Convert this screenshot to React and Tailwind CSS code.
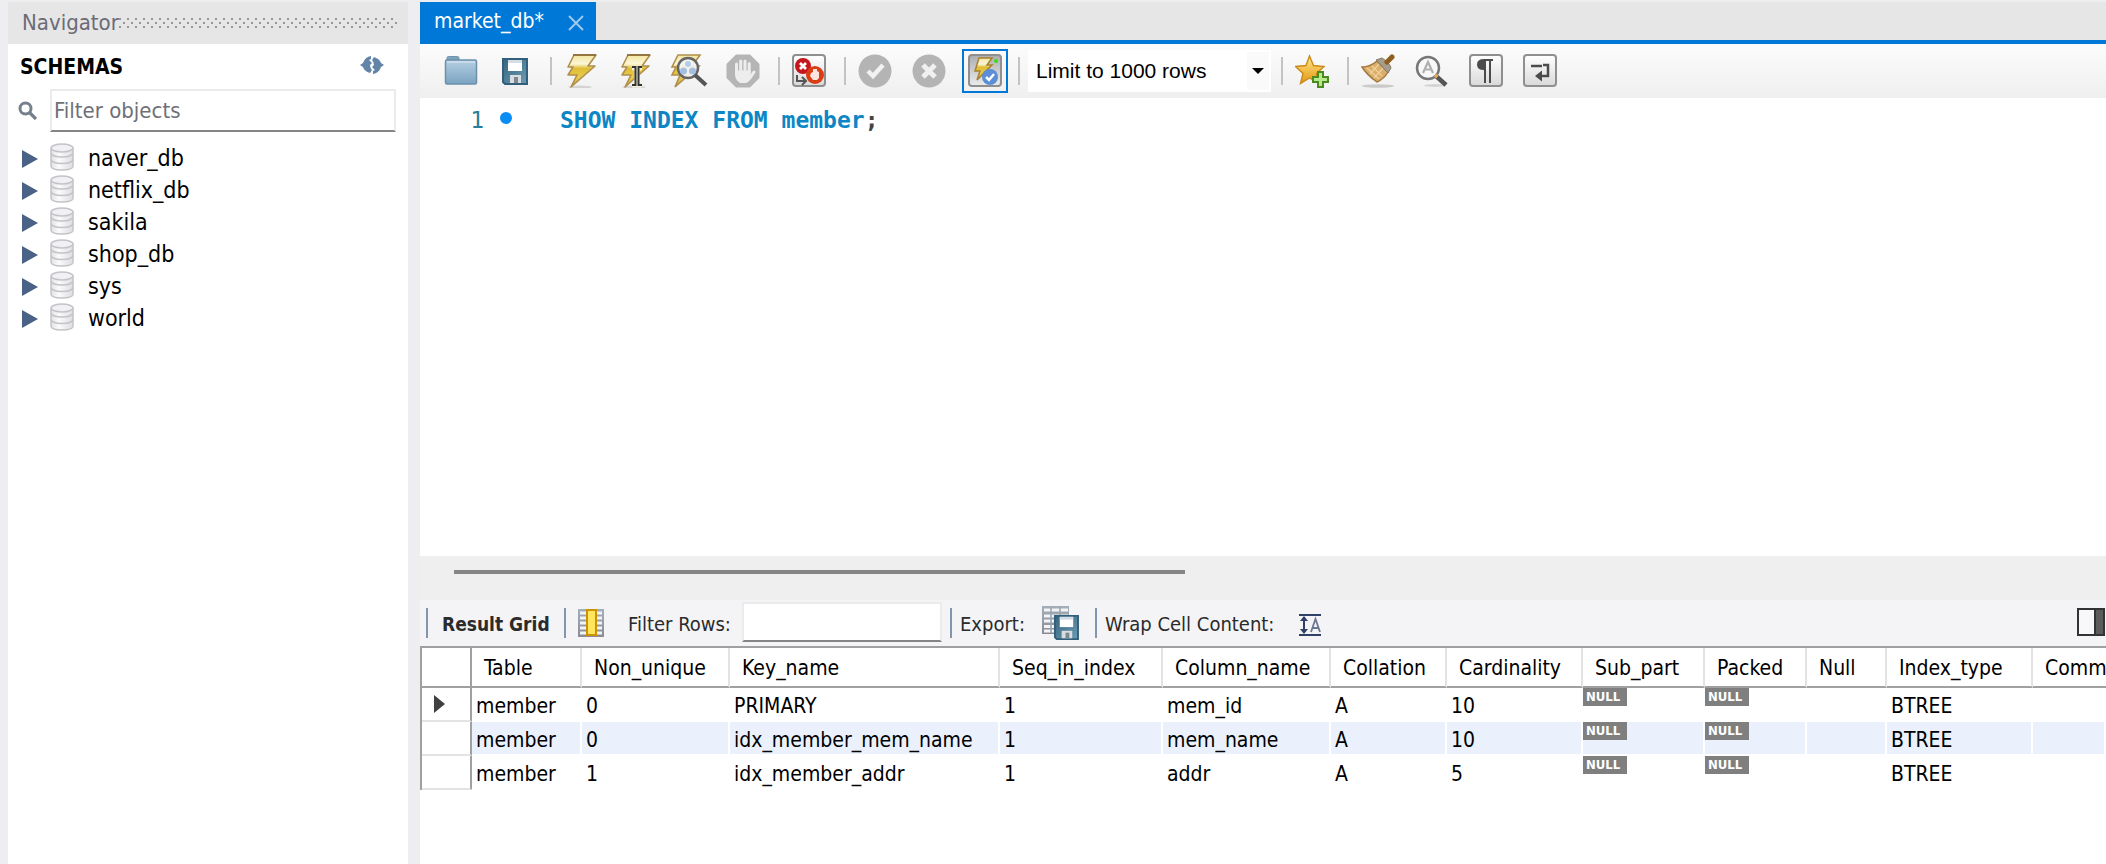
import React, { useState } from 'react';
import clsx from 'clsx';

const SCHEMAS = ['naver_db', 'netflix_db', 'sakila', 'shop_db', 'sys', 'world'];

const COLUMNS = [
  { name: 'Table', width: 'w-[110px]' },
  { name: 'Non_unique', width: 'w-[148px]' },
  { name: 'Key_name', width: 'w-[270px]' },
  { name: 'Seq_in_index', width: 'w-[163px]' },
  { name: 'Column_name', width: 'w-[168px]' },
  { name: 'Collation', width: 'w-[116px]' },
  { name: 'Cardinality', width: 'w-[136px]' },
  { name: 'Sub_part', width: 'w-[122px]' },
  { name: 'Packed', width: 'w-[102px]' },
  { name: 'Null', width: 'w-[80px]' },
  { name: 'Index_type', width: 'w-[146px]' },
  { name: 'Comment', width: 'w-auto' },
];

const ROWS = [
  ['member', '0', 'PRIMARY', '1', 'mem_id', 'A', '10', null, null, '', 'BTREE', ''],
  ['member', '0', 'idx_member_mem_name', '1', 'mem_name', 'A', '10', null, null, '', 'BTREE', ''],
  ['member', '1', 'idx_member_addr', '1', 'addr', 'A', '5', null, null, '', 'BTREE', ''],
];

const Icon = ({ size = 34, children }) => (
  <svg width={size} height={size} viewBox={`0 0 ${size} ${size}`} className="block shrink-0" aria-hidden="true">
    {children}
  </svg>
);

// gradients shared by all the toolbar icons
const IconDefs = () => (
  <svg className="absolute h-0 w-0" aria-hidden="true">
    <defs>
      <linearGradient id="gFolder" x1="0" y1="0" x2="0" y2="1">
        <stop offset="0" stopColor="#b5cfe2" />
        <stop offset="1" stopColor="#7ba3c1" />
      </linearGradient>
      <linearGradient id="gBolt" x1="0" y1="0" x2="0" y2="1">
        <stop offset="0" stopColor="#f3e6a0" />
        <stop offset="0.28" stopColor="#fbf6d8" />
        <stop offset="0.42" stopColor="#dfbd35" />
        <stop offset="0.7" stopColor="#e8cc4e" />
        <stop offset="1" stopColor="#c9a12e" />
      </linearGradient>
      <linearGradient id="gButton" x1="0" y1="0" x2="0" y2="1">
        <stop offset="0" stopColor="#ffffff" />
        <stop offset="1" stopColor="#d9d9d9" />
      </linearGradient>
      <linearGradient id="gPressed" x1="0" y1="0" x2="0" y2="1">
        <stop offset="0" stopColor="#adadad" />
        <stop offset="1" stopColor="#ececec" />
      </linearGradient>
      <linearGradient id="gStar" x1="0" y1="0" x2="0" y2="1">
        <stop offset="0" stopColor="#ffe98a" />
        <stop offset="1" stopColor="#e2960f" />
      </linearGradient>
      <linearGradient id="gGrid" x1="0" y1="0" x2="0" y2="1">
        <stop offset="0" stopColor="#a3b0bb" />
        <stop offset="1" stopColor="#8b8b93" />
      </linearGradient>
      <linearGradient id="gDisk" x1="0" y1="0" x2="1" y2="1">
        <stop offset="0" stopColor="#34647f" />
        <stop offset="1" stopColor="#6d9bb3" />
      </linearGradient>
      <linearGradient id="gDb" x1="0" y1="0" x2="1" y2="0">
        <stop offset="0" stopColor="#e2e2e5" />
        <stop offset="0.35" stopColor="#fafafb" />
        <stop offset="1" stopColor="#dddee2" />
      </linearGradient>
    </defs>
  </svg>
);

const Bolt = () => (
  <>
    <ellipse cx="16" cy="33" rx="12" ry="1.5" fill="#000" opacity="0.12" />
    <path d="M10 1H32L24 12H31L7 33L13 21H4L9 13H4Z" fill="url(#gBolt)" stroke="#b08f4e" strokeWidth="1.6" strokeLinejoin="round" />
    <path d="M9 1H32" stroke="#8a6a35" strokeWidth="1.6" />
  </>
);

const FolderIcon = () => (
  <Icon>
    <path d="M3 7V4q0-1.500 1.500-1.500h9q1.500 0 1.500 1.500v3z" fill="#7fa3bd" stroke="#6f93ad" />
    <rect x="1.500" y="6" width="31" height="24" rx="1.500" fill="url(#gFolder)" stroke="#6b90ab" strokeWidth="1.500" />
    <path d="M3 8H31" stroke="#cfe1ee" strokeWidth="1.500" />
  </Icon>
);

const Disk = () => (
  <>
    <path d="M1 1H25V26H3L1 24Z" fill="url(#gDisk)" stroke="#32607c" strokeWidth="2" />
    <rect x="6" y="2" width="14" height="11" fill="#fff" />
    <rect x="6" y="2" width="14" height="3" fill="#d5dde4" />
    <rect x="8" y="17" width="11" height="8" fill="#d9dde0" />
    <rect x="12" y="19" width="4" height="6" fill="#7c878f" />
  </>
);

const SaveIcon = () => (
  <Icon>
    <g transform="translate(4 4)">
      <Disk />
    </g>
  </Icon>
);

const BoltIcon = () => (
  <Icon>
    <Bolt />
  </Icon>
);

const BoltCursorIcon = () => (
  <Icon>
    <Bolt />
    <path d="M14 14H24M14 31H24M19 14V31" stroke="#f6f1dc" strokeWidth="5" />
    <path d="M14 13H17.500V31H14M24 13H20.500V31H24" fill="none" stroke="#333" strokeWidth="2" />
  </Icon>
);

const BoltSearchIcon = () => (
  <svg width="38" height="34" viewBox="0 0 38 34" className="block shrink-0" aria-hidden="true">
    <path d="M8 1H30L22 12H29L5 33L10 21H2L6 13H2Z" fill="url(#gBolt)" stroke="#b08f4e" strokeWidth="1.600" />
    <circle cx="18" cy="14" r="10" fill="#f3f5f2" fillOpacity="0.92" stroke="#666" strokeWidth="2.500" />
    <circle cx="18" cy="10" r="3" fill="#b5cdeb" />
    <circle cx="13.500" cy="17" r="3.500" fill="#a3c0e4" />
    <circle cx="22.500" cy="17" r="3.500" fill="#a3c0e4" />
    <path d="M25 21L36 31" stroke="#555" strokeWidth="4" />
  </svg>
);

const HandIcon = () => (
  <Icon>
    <path d="M10 0.500H24L33.500 10V24L24 33.500H10L0.500 24V10Z" fill="#b5b5b5" />
    <g fill="none" stroke="#ededed" strokeWidth="3" strokeLinecap="round">
      <path d="M10.500 18V10M14.700 17V7M19 17V7M23.200 18V9.500M24 24L28 18" />
    </g>
    <path d="M9 16.500H24.700V21L27 20Q25 27 20 29H14Q9 26 9 20Z" fill="#ededed" />
  </Icon>
);

const ButtonFrame = ({ fill = 'url(#gButton)' }) => (
  <rect x="1" y="1" width="32" height="31" rx="3" fill={fill} stroke="#8f8f8f" strokeWidth="2" />
);

const StopOnErrorIcon = () => (
  <Icon>
    <ButtonFrame />
    <path d="M5 21V27H13M10 23L14 27L10 31" fill="none" stroke="#555" strokeWidth="2" />
    <circle cx="11" cy="12" r="8" fill="#c4161c" />
    <path d="M8 9L14 15M14 9L8 15" stroke="#fff" strokeWidth="2.800" />
    <circle cx="23" cy="21" r="9" fill="#dc3c14" />
    <path d="M19 19L21 18V15H25V17L27 18V24L25 26H21L18 22Z" fill="#fbe5df" />
  </Icon>
);

const CommitIcon = () => (
  <Icon>
    <circle cx="17" cy="17" r="16.500" fill="#b4b4b4" />
    <path d="M10 17L15 22L25 11" fill="none" stroke="#f2f2f2" strokeWidth="4.500" />
  </Icon>
);

const RollbackIcon = () => (
  <Icon>
    <circle cx="17" cy="17" r="16.500" fill="#b4b4b4" />
    <path d="M11 11L23 23M23 11L11 23" fill="none" stroke="#f0f0f0" strokeWidth="5" />
  </Icon>
);

const AutoCommitIcon = () => (
  <Icon>
    <ButtonFrame fill="url(#gPressed)" />
    <path d="M11 4H24L19 11H24L9 26L12 17H7Z" fill="url(#gBolt)" stroke="#a9812f" strokeWidth="1.500" />
    <circle cx="28" cy="7" r="2" fill="#3fd81c" />
    <circle cx="22" cy="23" r="8" fill="#5b8ed6" />
    <path d="M18 23L21 26L26 20" fill="none" stroke="#fff" strokeWidth="2.500" />
  </Icon>
);

const StarAddIcon = () => (
  <Icon>
    <path d="M14.500 2L18.500 11.500L29 12.500L21.500 19.500L24 29.500L14.500 24L5.500 29.500L8 19.500L0.500 12.500L11 11.500Z" fill="url(#gStar)" stroke="#c98a1b" strokeWidth="1.400" />
    <path d="M23 18H28V23H33V28H28V33H23V28H18V23H23Z" fill="#b6e88c" stroke="#4b8a1c" strokeWidth="2" />
  </Icon>
);

const BroomIcon = () => (
  <Icon>
    <ellipse cx="17" cy="32" rx="16" ry="1.700" fill="#000" opacity="0.16" />
    <path d="M1 13Q9 13 16 7L27 18Q23 25 16 28Q6 21 1 13Z" fill="#dbae6b" stroke="#a27a41" strokeWidth="1.500" />
    <path d="M6 14L18 25M11 12L21 22M9 20L18 10M13 24L22 14" stroke="#f0d19a" strokeWidth="1.200" />
    <path d="M15 6L21 4Q29 9 30 14L27 19Z" fill="#a69c8c" stroke="#857a68" />
    <path d="M26 8L31 3" stroke="#8f5e1d" strokeWidth="5" strokeLinecap="round" />
  </Icon>
);

const FindIcon = () => (
  <Icon>
    <ellipse cx="20" cy="31.500" rx="11" ry="1.500" fill="#000" opacity="0.12" />
    <circle cx="13" cy="14" r="11" fill="#f8f8f8" stroke="#777" strokeWidth="2.500" />
    <path d="M8 19L13 8L18 19M10 15.500H16" fill="none" stroke="#b0b0b0" strokeWidth="2.200" />
    <path d="M21 22L31 31" stroke="#555" strokeWidth="4.500" />
    <path d="M20 21L22.500 23" stroke="#dca95e" strokeWidth="4" />
  </Icon>
);

const InvisiblesIcon = () => (
  <Icon>
    <ButtonFrame />
    <path d="M24 5H15Q8 5 8 10.500Q8 16 15 16V29H17V7H20V29H22V7H24Z" fill="#4b4b4b" />
  </Icon>
);

const WrapIcon = () => (
  <Icon>
    <ButtonFrame />
    <path d="M8 12H19M20 11H25V22H18" fill="none" stroke="#4b4b4b" strokeWidth="2.500" />
    <path d="M12 22L19 16.500V27.500Z" fill="#4b4b4b" />
  </Icon>
);

const RefreshIcon = () => (
  <svg width="24" height="18" viewBox="0 0 24 18" className="block" aria-hidden="true">
    <path d="M0 9L3 7Q5 1 11 0V3L9 4L12 7L10 9Q10 12 12 14L10 17Q4 15 3 11Z" fill="#6384a6" />
    <path d="M24 9L21 11Q19 17 13 18V15L15 14L12 11L14 9Q14 6 12 4L14 1Q20 3 21 7Z" fill="#6384a6" />
  </svg>
);

const SearchIcon = () => (
  <svg width="20" height="20" viewBox="0 0 20 20" className="block shrink-0" aria-hidden="true">
    <circle cx="7.500" cy="7.500" r="5.500" fill="none" stroke="#75808c" strokeWidth="3" />
    <path d="M11.500 11.500L18 18" stroke="#75808c" strokeWidth="3.200" />
  </svg>
);

const DatabaseIcon = () => (
  <svg width="24" height="28" viewBox="0 0 24 28" className="block shrink-0" aria-hidden="true">
    <path d="M1 5V23Q1 27 12 27T23 23V5" fill="url(#gDb)" stroke="#c3c4c9" strokeWidth="1.500" />
    <ellipse cx="12" cy="5" rx="11" ry="4" fill="#f1f1f3" stroke="#c3c4c9" strokeWidth="1.500" />
    <path d="M1 10Q2 14 12 14T23 10M1 16.500Q2 20.500 12 20.500T23 16.500" fill="none" stroke="#c3c4c9" strokeWidth="1.500" />
  </svg>
);

const GridIcon = () => (
  <svg width="26" height="28" viewBox="0 0 26 28" className="block" aria-hidden="true">
    <rect width="26" height="28" fill="url(#gGrid)" />
    <path d="M2 4H24M2 9H24M2 14H24M2 19H24M2 24H24" stroke="#f1f4f6" strokeWidth="3" />
    <rect x="9" y="1" width="9" height="25" fill="#ffe65c" stroke="#d29200" strokeWidth="2" />
  </svg>
);

const ExportIcon = () => (
  <svg width="38" height="34" viewBox="0 0 38 34" className="block" aria-hidden="true">
    <rect width="27" height="28" fill="url(#gGrid)" />
    <path d="M2 4H26M2 10H26M2 15H26M2 20.500H26M2 25H26" stroke="#f4f4f7" strokeWidth="3" />
    <path d="M9 1V27M18 1V27" stroke="#9ba3ab" strokeWidth="1.500" />
    <g transform="translate(12 9) scale(0.96 0.93)">
      <Disk />
    </g>
  </svg>
);

const WrapCellIcon = () => (
  <svg width="22" height="22" viewBox="0 0 22 22" className="block" aria-hidden="true">
    <path d="M0 1H22M0 21H22" stroke="#2f4266" strokeWidth="2" />
    <path d="M5 4V18" stroke="#2f4266" strokeWidth="2" />
    <path d="M1 7L5 2L9 7ZM1 15L5 20L9 15Z" fill="#2f4266" />
    <path d="M12 18L16.500 5L21 18M13.500 14H19.500" fill="none" stroke="#6b7690" strokeWidth="1.800" />
  </svg>
);

const PanelIcon = () => (
  <svg width="28" height="28" viewBox="0 0 28 28" className="block" aria-hidden="true">
    <rect x="1" y="1" width="26" height="26" fill="#f8f8fa" stroke="#333" strokeWidth="2" />
    <rect x="18" y="1" width="9" height="26" fill="#5c5c5c" stroke="#333" strokeWidth="2" />
  </svg>
);

const ToolButton = ({ label, active, children }) => (
  <button
    type="button"
    aria-label={label}
    className={clsx(
      'flex h-[44px] shrink-0 items-center justify-center',
      active ? 'ml-1.5 mr-0.5 w-[46px] border-2 border-[#0078d7]' : 'w-[54px]'
    )}
  >
    {children}
  </button>
);

const Separator = () => <span className="ml-2 mr-0.5 h-7 w-0.5 shrink-0 bg-[#c3c3c3]" />;

const PanelSeparator = () => <span className="h-[30px] w-0.5 shrink-0 bg-[#8296b0]" />;

const Navigator = () => (
  <aside className="flex w-[400px] shrink-0 flex-col bg-white text-[23px]">
    <div className="flex h-[42px] items-center bg-[#e6e6e6] pl-3.5 pr-2.5 text-[22px] text-[#6b6b76]">
      <span className="leading-[28px]">Navigator</span>
      <svg className="h-2.5 min-w-0 flex-1" aria-hidden="true">
        <pattern id="grip" width="8" height="8" patternUnits="userSpaceOnUse">
          <path d="M0 0h2v2h-2zM4 4h2v2h-2z" fill="#979797" />
        </pattern>
        <rect width="100%" height="10" fill="url(#grip)" />
      </svg>
    </div>
    <div className="flex h-[45px] items-center justify-between pl-3 pr-6">
      <h2 className="text-[21px] font-bold leading-[28px]">SCHEMAS</h2>
      <button type="button" aria-label="Refresh schemas" className="pb-1">
        <RefreshIcon />
      </button>
    </div>
    <label className="flex items-center gap-3 pl-2.5 pr-3">
      <SearchIcon />
      <input
        type="text"
        aria-label="Filter objects"
        placeholder="Filter objects"
        className="h-[43px] min-w-0 flex-1 border-2 border-[#ebebeb] border-b-[#858585] bg-white px-0.5 text-[22px] outline-none placeholder:text-[#6f6f78]"
      />
    </label>
    <ul className="pt-2.5">
      {SCHEMAS.map((schema) => (
        <li key={schema} className="flex h-8 items-center pl-3.5">
          <svg width="16" height="18" viewBox="0 0 16 18" className="mt-0.5 shrink-0" aria-hidden="true">
            <path d="M0 0L16 9L0 18Z" fill="#4a6285" />
          </svg>
          <span className="ml-3 pb-0.5">
            <DatabaseIcon />
          </span>
          <span className="ml-3.5 leading-[28px]">{schema}</span>
        </li>
      ))}
    </ul>
  </aside>
);

const Toolbar = () => {
  const [limit, setLimit] = useState('1000');

  return (
    <div className="flex h-[54px] items-center overflow-hidden bg-linear-to-b from-[#fcfcfc] to-[#efefef] pl-3.5">
      <ToolButton label="Open script"><FolderIcon /></ToolButton>
      <ToolButton label="Save script"><SaveIcon /></ToolButton>
      <Separator />
      <ToolButton label="Execute"><BoltIcon /></ToolButton>
      <ToolButton label="Execute current statement"><BoltCursorIcon /></ToolButton>
      <ToolButton label="Explain"><BoltSearchIcon /></ToolButton>
      <ToolButton label="Stop"><HandIcon /></ToolButton>
      <Separator />
      <ToolButton label="Toggle stop on error"><StopOnErrorIcon /></ToolButton>
      <Separator />
      <ToolButton label="Commit"><CommitIcon /></ToolButton>
      <ToolButton label="Rollback"><RollbackIcon /></ToolButton>
      <ToolButton label="Toggle autocommit" active><AutoCommitIcon /></ToolButton>
      <Separator />
      <div className="relative ml-1.5 mr-0.5 h-[42px] w-[243px] shrink-0 bg-white">
        <select
          aria-label="Row limit"
          value={limit}
          onChange={(e) => setLimit(e.target.value)}
          className="h-full w-full appearance-none bg-transparent pl-2 font-['Liberation_Sans',Arial,sans-serif] text-[21px] outline-none"
        >
          <option value="1000">Limit to 1000 rows</option>
        </select>
        <span className="pointer-events-none absolute inset-y-0.5 right-0.5 flex w-[22px] items-center justify-center bg-[#fafafa]">
          <svg width="12" height="6" viewBox="0 0 12 6" aria-hidden="true">
            <path d="M0 0H12L6 6Z" fill="#000" />
          </svg>
        </span>
      </div>
      <Separator />
      <ToolButton label="Save snippet"><StarAddIcon /></ToolButton>
      <Separator />
      <ToolButton label="Beautify"><BroomIcon /></ToolButton>
      <ToolButton label="Find"><FindIcon /></ToolButton>
      <ToolButton label="Toggle invisible characters"><InvisiblesIcon /></ToolButton>
      <ToolButton label="Toggle word wrap"><WrapIcon /></ToolButton>
    </div>
  );
};

const Editor = () => (
  <div className="h-[458px] bg-white pt-2 font-['DejaVu_Sans_Mono',monospace] text-[23px] leading-[28px]">
    <div className="flex items-center">
      <span className="w-[64px] text-right text-[#2b7f9c]">1</span>
      <span className="mb-1 ml-4 size-3 rounded-full bg-[#0a8cf5]" />
      <code className="ml-12 font-['DejaVu_Sans_Mono',monospace] font-bold text-[#0c86c4]">
        SHOW INDEX FROM member<span className="text-[#444]">;</span>
      </code>
    </div>
  </div>
);

const ResultToolbar = () => (
  <div className="flex h-[46px] items-center bg-[#f4f4f7] pl-1.5 text-[20px] leading-[26px] text-[#2b2b2b]">
    <PanelSeparator />
    <span className="w-[136px] whitespace-nowrap pl-3.5 pt-0.5 text-[19px] font-bold">Result Grid</span>
    <PanelSeparator />
    <span className="ml-3">
      <GridIcon />
    </span>
    <label htmlFor="filter-rows" className="ml-6 w-[114px] whitespace-nowrap pt-0.5">Filter Rows:</label>
    <input
      id="filter-rows"
      type="text"
      className="mb-0.5 h-[40px] w-[200px] border-2 border-[#ebebeb] border-b-[#858585] bg-white px-1 outline-none"
    />
    <span className="ml-2 flex items-center">
      <PanelSeparator />
      <span className="w-[90px] pl-2 pt-0.5">Export:</span>
      <button type="button" aria-label="Export recordset">
        <ExportIcon />
      </button>
    </span>
    <span className="ml-[15px] flex items-center">
      <PanelSeparator />
      <span className="w-[202px] whitespace-nowrap pl-2 pt-0.5">Wrap Cell Content:</span>
      <button type="button" aria-label="Wrap cell content" className="pt-1">
        <WrapCellIcon />
      </button>
    </span>
    <button type="button" aria-label="Toggle side panel" className="ml-auto mr-px pb-0.5">
      <PanelIcon />
    </button>
  </div>
);

const NullBadge = () => (
  <span className="block h-[18px] w-11 bg-[#7f7f7f] pl-[3px] text-[13px] font-bold leading-[18px] text-white">NULL</span>
);

const ResultGrid = () => (
  <div className="overflow-hidden border-l-2 border-t-2 border-[#a0a0a0] bg-white">
    <table className="w-full table-fixed border-separate border-spacing-0 text-[21px]">
      <thead>
        <tr className="h-[40px]">
          <th className="w-[50px] border-b-2 border-r-2 border-[#a0a0a0]" aria-label="Row" />
          {COLUMNS.map((column) => (
            <th
              key={column.name}
              className={clsx(
                'overflow-hidden whitespace-nowrap border-b-2 border-r-2 border-b-[#a0a0a0] border-r-[#e3e3e3] p-0 pl-3 pt-0.5 text-left font-normal leading-[28px] last:border-r-0',
                column.width
              )}
            >
              {column.name}
            </th>
          ))}
        </tr>
      </thead>
      <tbody>
        {ROWS.map((row, index) => (
          <tr key={row[2]} className="h-[34px]">
            <th className="border-b-2 border-r-2 border-b-[#e3e3e3] border-r-[#a0a0a0] p-0 pl-3 text-left">
              {index === 0 && (
                <svg width="11" height="18" viewBox="0 0 11 18" className="block" aria-label="Current row">
                  <path d="M0 0L11 9L0 18Z" fill="#404040" />
                </svg>
              )}
            </th>
            {row.map((value, i) => (
              <td
                key={COLUMNS[i].name}
                className={clsx(
                  'whitespace-nowrap border-b-2 border-r-2 border-white p-0 leading-[28px]',
                  value === null ? 'align-top' : 'pl-1 pt-1',
                  index % 2 === 1 && 'bg-[#eaf1fc] bg-clip-padding'
                )}
              >
                {value === null ? <NullBadge /> : value}
              </td>
            ))}
          </tr>
        ))}
      </tbody>
    </table>
  </div>
);

const App = () => (
  <div className="flex min-h-screen overflow-hidden bg-[#eeeef0] pl-2 pt-0.5 font-['DejaVu_Sans_Condensed','DejaVu_Sans',sans-serif] text-black">
    <IconDefs />
    <Navigator />
    <main className="ml-3 flex min-w-0 flex-1 flex-col bg-white">
      <div className="flex h-[42px] border-b-4 border-[#0078d7] bg-[#e6e6e6]">
        <div className="flex w-[176px] items-center justify-between bg-[#0078d7] pl-3.5 pr-3 text-[21px] text-white">
          <span className="leading-[28px]">market_db*</span>
          <button type="button" aria-label="Close tab" className="pt-1">
            <svg width="16" height="16" viewBox="0 0 16 16" aria-hidden="true">
              <path d="M1 1L15 15M15 1L1 15" stroke="#9cc9ef" strokeWidth="2" />
            </svg>
          </button>
        </div>
      </div>
      <Toolbar />
      <Editor />
      <div className="h-11 bg-[#efefef] pl-[34px] pt-3.5">
        <div className="h-1 w-[731px] bg-[#858585]" />
      </div>
      <ResultToolbar />
      <ResultGrid />
    </main>
  </div>
);

export default App;
